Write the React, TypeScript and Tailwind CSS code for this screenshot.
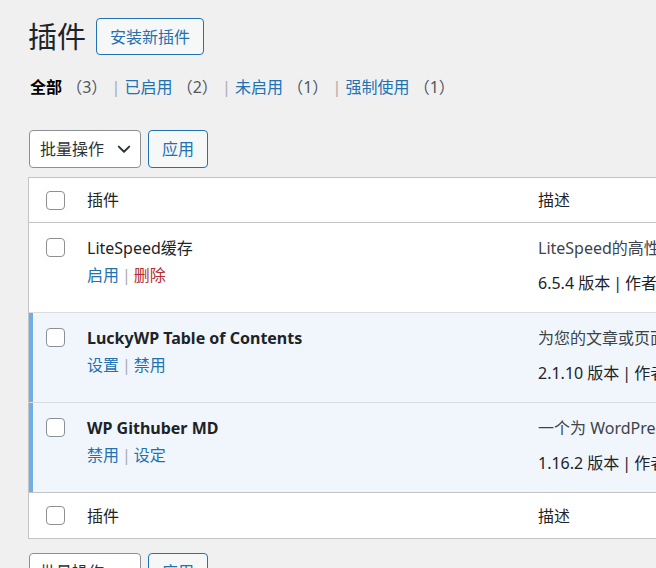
const font = { fontFamily: '"Noto Sans", "Noto Sans CJK SC", sans-serif' };

type Plugin = {
  name: string;
  active: boolean;
  actions: { label: string; danger?: boolean }[];
  desc: string;
  version: string;
  author: string;
};

const plugins: Plugin[] = [
  {
    name: 'LiteSpeed缓存',
    active: false,
    actions: [{ label: '启用' }, { label: '删除', danger: true }],
    desc: 'LiteSpeed的高性能页面缓存和网站优化插件。',
    version: '6.5.4',
    author: 'LiteSpeed Technologies',
  },
  {
    name: 'LuckyWP Table of Contents',
    active: true,
    actions: [{ label: '设置' }, { label: '禁用' }],
    desc: '为您的文章或页面创建目录，支持自定义外观。',
    version: '2.1.10',
    author: 'LuckyWP',
  },
  {
    name: 'WP Githuber MD',
    active: true,
    actions: [{ label: '禁用' }, { label: '设定' }],
    desc: '一个为 WordPress 打造的一体化 Markdown 插件。',
    version: '1.16.2',
    author: 'Terry Lin',
  },
];

function Checkbox() {
  return <span className="block w-[19px] h-[19px] rounded-[4px] border border-[#8c8f94] bg-white" />;
}

function BulkActions() {
  return (
    <div className="flex items-center gap-[7px] pl-[1px]">
      <div className="flex items-center justify-between w-[112px] h-[38px] pl-[10px] pr-[8px] bg-white border border-[#8c8f94] rounded-[4px] text-[16px] text-[#2c3338]">
        <span>批量操作</span>
        <svg width="16" height="16" viewBox="0 0 20 20" fill="none">
          <path d="M3.5 7l6.5 6.5L16.5 7" stroke="#2c3338" strokeWidth="2.4" strokeLinecap="round" strokeLinejoin="round" />
        </svg>
      </div>
      <button className="h-[38px] w-[60px] bg-[#f6f7f7] border border-[#2271b1] rounded-[4px] text-[16px] text-[#2271b1]">
        应用
      </button>
    </div>
  );
}

function HeaderRow({ top }: { top?: boolean }) {
  return (
    <div className={`flex items-center h-[45px] ${top ? 'border-b border-[#c3c4c7]' : ''}`}>
      <div className="w-[46px] pl-[17px]">
        <Checkbox />
      </div>
      <div className="w-[453px] pl-[12px] text-[16px] text-[#1d2327]">插件</div>
      <div className="pl-[10px] text-[16px] text-[#1d2327]">描述</div>
    </div>
  );
}

export default function App() {
  return (
    <div className="w-full h-[568px] overflow-hidden bg-[#f0f0f1] pl-[28px]" style={font}>
      {/* 标题 */}
      <div className="flex items-center pt-[18px]">
        <h1 className="text-[29px] leading-[37px] text-[#1d2327]">插件</h1>
        <button className="ml-[10px] h-[37px] px-[13px] bg-[#f6f7f7] border border-[#2271b1] rounded-[4px] text-[16px] text-[#2271b1]">
          安装新插件
        </button>
      </div>

      {/* 筛选 */}
      <div className="mt-[21px] pl-[2px] text-[16px] leading-[23px] text-[#50575e] whitespace-nowrap">
        <span className="font-bold text-black">全部</span> （3） <span className="text-[#a7aaad]">|</span>{' '}
        <span className="text-[#2271b1]">已启用</span> （2） <span className="text-[#a7aaad]">|</span>{' '}
        <span className="text-[#2271b1]">未启用</span> （1） <span className="text-[#a7aaad]">|</span>{' '}
        <span className="text-[#2271b1]">强制使用</span> （1）
      </div>

      <div className="mt-[31px]">
        <BulkActions />
      </div>

      {/* 插件表格 */}
      <div className="mt-[9px] w-[1000px] bg-white border border-[#c3c4c7]">
        <HeaderRow top />
        {plugins.map((p) => (
          <div
            key={p.name}
            className={`flex h-[90px] border-b ${
              p.active ? 'bg-[#f0f6fc] shadow-[inset_4px_0_0_#72aee6]' : ''
            } ${p === plugins[2] ? 'border-[#c3c4c7]' : 'border-[#dcdcde]'}`}
          >
            <div className="w-[46px] pl-[17px] pt-[15px]">
              <Checkbox />
            </div>
            <div className="w-[453px] pl-[12px] pt-[14px]">
              <div className={`text-[16px] leading-[23px] text-[#1d2327] ${p.active ? 'font-bold' : ''}`}>{p.name}</div>
              <div className="mt-[4px] text-[16px] leading-[23px] text-[#a7aaad]">
                <span className="text-[#2271b1]">{p.actions[0].label}</span>
                <span className="mx-[3px]">|</span>
                <span className={p.actions[1].danger ? 'text-[#b32d2e]' : 'text-[#2271b1]'}>{p.actions[1].label}</span>
              </div>
            </div>
            <div className="pl-[10px] pt-[14px] text-[16px] leading-[23px] whitespace-nowrap">
              <div className="text-[#3c434a]">{p.desc}</div>
              <div className="mt-[12px] text-[#1d2327]">
                {p.version} 版本<span className="mx-[3px]">|</span>作者：<span className="text-[#2271b1]">{p.author}</span>
                <span className="mx-[3px]">|</span>
                <span className="text-[#2271b1]">查看详情</span>
              </div>
            </div>
          </div>
        ))}
        <HeaderRow />
      </div>

      <div className="mt-[14px]">
        <BulkActions />
      </div>
    </div>
  );
}
